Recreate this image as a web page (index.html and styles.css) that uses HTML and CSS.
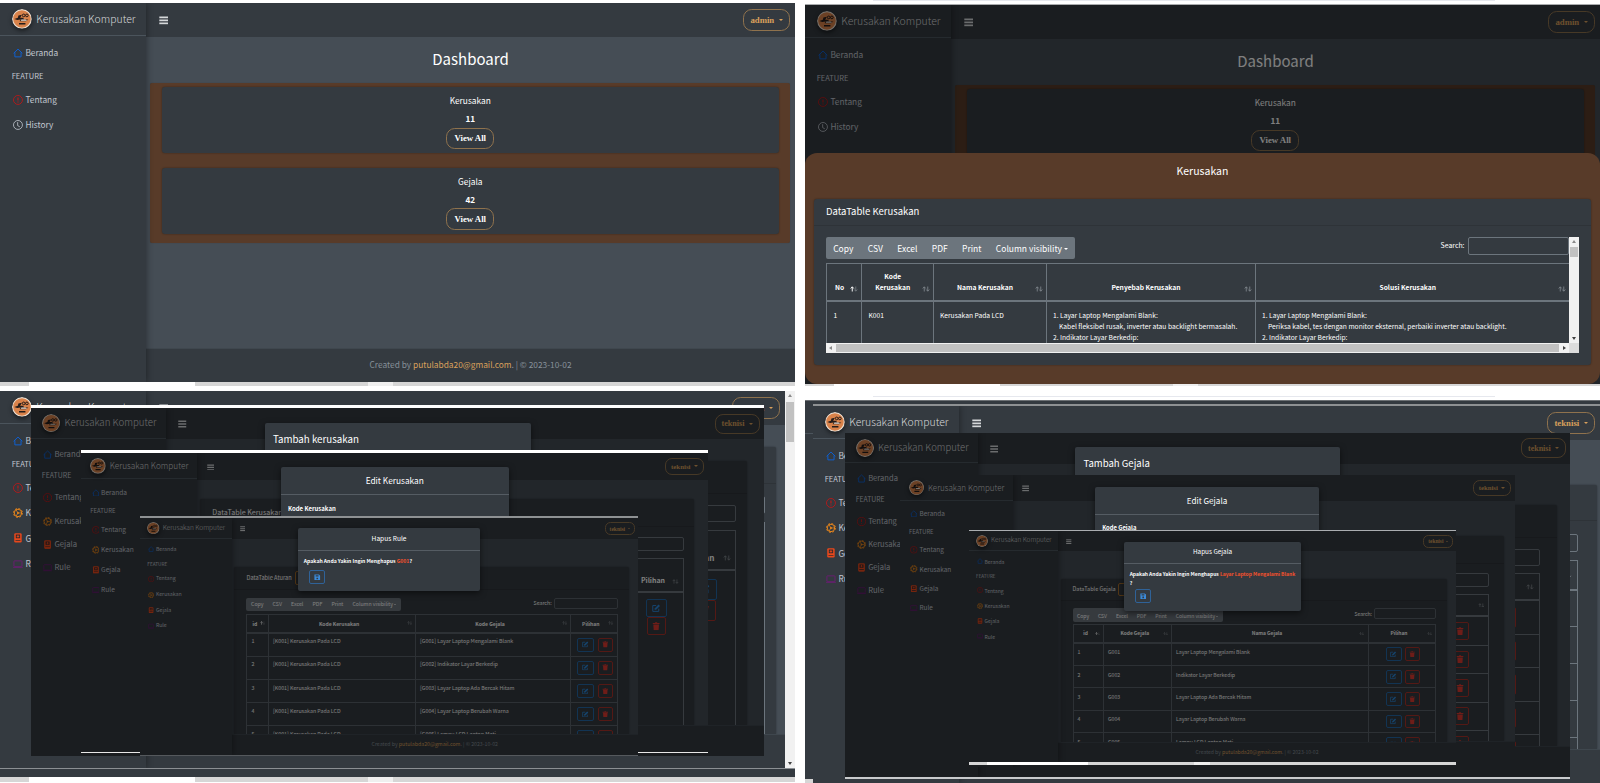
FILE: index.html
```
<!DOCTYPE html>
<html lang="id">
<head>
<meta charset="utf-8">
<title>Kerusakan Komputer</title>
<link rel="stylesheet" href="styles.css">
</head>
<body>
<svg width="0" height="0" class="defs">
  <symbol id="logo" viewBox="0 0 34 34"><circle cx="17" cy="17" r="17" fill="#e9dccf"/><circle cx="17" cy="17" r="15" fill="#d9824a"/><path d="M4 17l6-2 1-4 6-1-3 5h5l2 3h7l-4 3H13l2-3-6 1zM12 24h11v2.500H12z" fill="#241c1a"/><circle cx="20" cy="11" r="2.300" fill="none" stroke="#241c1a" stroke-width="1.700"/><circle cx="25.500" cy="11" r="2.300" fill="none" stroke="#241c1a" stroke-width="1.700"/><path d="M16 18h7l3 2H15z" fill="#f0e6dc"/></symbol>
  <symbol id="house" viewBox="0 0 16 16"><path d="M1 8.500L8 1.700l7 6.800M3 7v7.300h10V7" fill="none" stroke="#0d62d8" stroke-width="1.500"/></symbol>
  <symbol id="alert" viewBox="0 0 16 16"><circle cx="8" cy="8" r="7.200" fill="none" stroke="#c01818" stroke-width="1.400"/><path d="M8 4v5M8 10.500v1.600" stroke="#c01818" stroke-width="1.800"/></symbol>
  <symbol id="clock" viewBox="0 0 16 16"><circle cx="8" cy="8" r="7.200" fill="none" stroke="#c2c7d0" stroke-width="1.300"/><path d="M7.500 3.500V9l3.500 2" fill="none" stroke="#c2c7d0" stroke-width="1.300"/></symbol>
  <symbol id="gear" viewBox="0 0 16 16"><circle cx="8" cy="8" r="6" fill="none" stroke="#e8861c" stroke-width="1.600"/><circle cx="8" cy="8" r="7.200" fill="none" stroke="#e8861c" stroke-width="1.500" stroke-dasharray="3 2.650"/><path d="M8 8h5.500M8 8L5 3M8 8l-3 5" stroke="#e8861c" stroke-width="1.200"/><circle cx="8" cy="8" r="1.600" fill="#e8861c"/></symbol>
  <symbol id="medic" viewBox="0 0 16 16"><rect x="2" y=".5" width="12" height="15" rx="2" fill="#e8481c"/><path d="M4.500 2.500h7v6h-7zM4 11.200h8v1.200H4z" fill="#3a2b2c"/><path d="M8 3.500v4M6 5.500h4" stroke="#e8481c" stroke-width="1.500"/></symbol>
  <symbol id="rule" viewBox="0 0 16 16"><rect x="1.500" y="3" width="13" height="9.500" rx="1" fill="none" stroke="#7a1580" stroke-width="1.200"/><path d="M0 13.500h16" stroke="#7a1580" stroke-width="1"/></symbol>
  <symbol id="bars" viewBox="0 0 16 16"><path d="M0 2.500h16M0 8h16M0 13.500h16" stroke="#d5d8da" stroke-width="3"/></symbol>
  <symbol id="sort" viewBox="0 0 16 12"><path d="M4.500 11V2M1.500 5l3-3.500 3 3.500M11.500 1v9M8.500 7l3 3.500 3-3.500" fill="none" stroke="currentColor" stroke-width="1.500"/></symbol>
  <symbol id="sortup" viewBox="0 0 16 12"><path d="M4.500 11V2M1.500 5l3-3.500 3 3.500" fill="none" stroke="#fff" stroke-width="1.900"/><path d="M11.500 1v9M8.500 7l3 3.500 3-3.500" fill="none" stroke="#8a9096" stroke-width="1.200"/></symbol>
  <symbol id="edit" viewBox="0 0 16 16"><path d="M13 9v5.200H1.500V3H8" fill="none" stroke="#2b87d8" stroke-width="1.900"/><path d="M5 11.500l.6-3.400L12.500 1l2.900 2.700-7 7.100z" fill="#2b87d8"/></symbol>
  <symbol id="trash" viewBox="0 0 16 16"><path d="M1.500 2h4L6.500.7h3L10.500 2h4v2h-13zM2.500 5h11l-.8 10.800H3.300z" fill="#dc3a30"/></symbol>
  <symbol id="save" viewBox="0 0 16 16"><path d="M1 1h11l3 3v11H1z" fill="#3b8ad8"/><path d="M4 3h7v3H4zM6 9h4v4H6z" fill="#343a40"/></symbol>
</svg>

<main class="board">

<!-- Dashboard -->
<section class="win w1">
  <aside class="side"><div class="brand"><svg><use href="#logo"/></svg><span>Kerusakan Komputer</span></div>
    <ul><li><svg><use href="#house"/></svg>Beranda</li><li class="cap">FEATURE</li><li><svg><use href="#alert"/></svg>Tentang</li><li><svg><use href="#clock"/></svg>History</li></ul></aside>
  <div class="page">
    <header class="nav"><svg><use href="#bars"/></svg><button class="pill">admin <i></i></button></header>
    <div class="body"><h1>Dashboard</h1>
      <div class="brown"><div class="stat"><span>Kerusakan</span><b>11</b><button class="pill view">View All</button></div><div class="stat"><span>Gejala</span><b>42</b><button class="pill view">View All</button></div></div></div>
    <footer class="foot">Created by <b>putulabda20@gmail.com</b>. | © 2023-10-02</footer>
  </div>
</section>
<div class="strip s1"></div>

<!-- Dashboard with the Kerusakan sheet open -->
<div class="urlbar u1"></div>
<section class="win w2">
  <aside class="side"><div class="brand"><svg><use href="#logo"/></svg><span>Kerusakan Komputer</span></div>
    <ul><li><svg><use href="#house"/></svg>Beranda</li><li class="cap">FEATURE</li><li><svg><use href="#alert"/></svg>Tentang</li><li><svg><use href="#clock"/></svg>History</li></ul></aside>
  <div class="page">
    <header class="nav"><svg><use href="#bars"/></svg><button class="pill">admin <i></i></button></header>
    <div class="body"><h1>Dashboard</h1>
      <div class="brown"><div class="stat"><span>Kerusakan</span><b>11</b><button class="pill view">View All</button></div><div class="stat"></div></div></div>
  </div>
  <div class="shade"></div>
  <div class="sheet">
    <h2>Kerusakan</h2>
    <div class="card">
      <div class="chead">DataTable Kerusakan</div>
      <div class="scroller">
        <div class="view-port">
          <div class="tools"><div class="btns"><span>Copy</span><span>CSV</span><span>Excel</span><span>PDF</span><span>Print</span><span>Column visibility <i></i></span></div><label>Search: <span class="inp"></span></label></div>
          <div class="grid">
            <div class="tr th"><div>No<svg><use href="#sortup"/></svg></div><div>Kode<br>Kerusakan<svg><use href="#sort"/></svg></div><div>Nama Kerusakan<svg><use href="#sort"/></svg></div><div>Penyebab Kerusakan<svg><use href="#sort"/></svg></div><div>Solusi Kerusakan<svg><use href="#sort"/></svg></div></div>
            <div class="tr"><div>1</div><div>K001</div><div>Kerusakan Pada LCD</div>
              <div>1. Layar Laptop Mengalami Blank:<br><span class="ind">Kabel fleksibel rusak, inverter atau backlight bermasalah.</span><br>2. Indikator Layar Berkedip:</div>
              <div>1. Layar Laptop Mengalami Blank:<br><span class="ind">Periksa kabel, tes dengan monitor eksternal, perbaiki inverter atau backlight.</span><br>2. Indikator Layar Berkedip:</div></div>
          </div>
        </div>
        <div class="vbar"><i class="up"></i><em></em><i class="dn"></i></div>
        <div class="hbar"><i class="lf"></i><em></em><i class="rt"></i></div>
        <div class="corner"></div>
      </div>
    </div>
  </div>
</section>
<div class="strip s2"></div>

<!-- Kerusakan and rule windows -->
<section class="win w3">
  <aside class="side"><div class="brand"><svg><use href="#logo"/></svg><span>Kerusakan Komputer</span></div>
    <ul><li><svg><use href="#house"/></svg>Beranda</li><li class="cap">FEATURE</li><li><svg><use href="#alert"/></svg>Tentang</li><li><svg><use href="#gear"/></svg>Kerusakan</li><li><svg><use href="#medic"/></svg>Gejala</li><li><svg><use href="#rule"/></svg>Rule</li></ul></aside>
  <div class="page">
    <header class="nav"><svg><use href="#bars"/></svg><button class="pill">teknisi <i></i></button></header>
    <div class="body"><div class="panel"><div class="chead"></div><div class="tools"><label><span class="inp"></span></label></div><div class="grid"><div class="tr th"><div></div><div></div></div><div class="tr"><div></div><div></div></div></div></div></div>
    <footer class="foot"></footer>
  </div>
  <div class="winbar"><i class="up"></i><em></em><i class="dn"></i></div>
</section>
<div class="under"></div>
<div class="strip s3"></div>

<section class="win w3b">
  <aside class="side"><div class="brand"><svg><use href="#logo"/></svg><span>Kerusakan Komputer</span></div>
    <ul><li><svg><use href="#house"/></svg>Beranda</li><li class="cap">FEATURE</li><li><svg><use href="#alert"/></svg>Tentang</li><li><svg><use href="#gear"/></svg>Kerusakan</li><li><svg><use href="#medic"/></svg>Gejala</li><li><svg><use href="#rule"/></svg>Rule</li></ul></aside>
  <div class="page">
    <header class="nav"><svg><use href="#bars"/></svg><button class="pill">teknisi <i></i></button></header>
    <div class="body"><div class="panel"><div class="chead"></div><div class="tools"><label><span class="inp"></span></label></div><div class="grid"><div class="tr th"><div></div><div>Pilihan<svg><use href="#sort"/></svg></div></div><div class="tr"><div></div><div class="acts"><span class="ab"><svg><use href="#edit"/></svg></span><span class="ab del"><svg><use href="#trash"/></svg></span></div></div></div></div></div>
    <footer class="foot"></footer>
  </div>
  <div class="shade"></div>
  <div class="modal m-left"><h3>Tambah kerusakan</h3></div>
</section>

<section class="win w3c">
  <aside class="side"><div class="brand"><svg><use href="#logo"/></svg><span>Kerusakan Komputer</span></div>
    <ul><li><svg><use href="#house"/></svg>Beranda</li><li class="cap">FEATURE</li><li><svg><use href="#alert"/></svg>Tentang</li><li><svg><use href="#gear"/></svg>Kerusakan</li><li><svg><use href="#medic"/></svg>Gejala</li><li><svg><use href="#rule"/></svg>Rule</li></ul></aside>
  <div class="page">
    <header class="nav"><svg><use href="#bars"/></svg><button class="pill">teknisi <i></i></button></header>
    <div class="body"><div class="panel"><div class="chead">DataTable Kerusakan</div><div class="tools"><label><span class="inp"></span></label></div><div class="grid"><div class="tr th"><div></div><div>Pilihan<svg><use href="#sort"/></svg></div></div><div class="tr"><div></div><div class="acts"><span class="ab"><svg><use href="#edit"/></svg></span><span class="ab del"><svg><use href="#trash"/></svg></span></div></div></div></div></div>
    <footer class="foot"></footer>
  </div>
  <div class="shade"></div>
  <div class="modal"><h3>Edit Kerusakan</h3><p><b>Kode Kerusakan</b></p></div>
</section>

<section class="win w3d">
  <aside class="side"><div class="brand"><svg><use href="#logo"/></svg><span>Kerusakan Komputer</span></div>
    <ul><li><svg><use href="#house"/></svg>Beranda</li><li class="cap">FEATURE</li><li><svg><use href="#alert"/></svg>Tentang</li><li><svg><use href="#gear"/></svg>Kerusakan</li><li><svg><use href="#medic"/></svg>Gejala</li><li><svg><use href="#rule"/></svg>Rule</li></ul></aside>
  <div class="page">
    <header class="nav"><svg><use href="#bars"/></svg><button class="pill">teknisi <i></i></button></header>
    <div class="body"><div class="panel"><div class="chead">DataTable Aturan <span class="add"></span></div>
      <div class="tools"><div class="btns"><span>Copy</span><span>CSV</span><span>Excel</span><span>PDF</span><span>Print</span><span>Column visibility <i></i></span></div><label>Search: <span class="inp"></span></label></div>
      <div class="grid">
        <div class="tr th"><div>id<svg><use href="#sortup"/></svg></div><div>Kode Kerusakan<svg><use href="#sort"/></svg></div><div>Kode Gejala<svg><use href="#sort"/></svg></div><div>Pilihan<svg><use href="#sort"/></svg></div></div>
        <div class="tr"><div>1</div><div>[K001] Kerusakan Pada LCD</div><div>[G001] Layar Laptop Mengalami Blank</div><div class="acts"><span class="ab"><svg><use href="#edit"/></svg></span><span class="ab del"><svg><use href="#trash"/></svg></span></div></div>
        <div class="tr"><div>2</div><div>[K001] Kerusakan Pada LCD</div><div>[G002] Indikator Layar Berkedip</div><div class="acts"><span class="ab"><svg><use href="#edit"/></svg></span><span class="ab del"><svg><use href="#trash"/></svg></span></div></div>
        <div class="tr"><div>3</div><div>[K001] Kerusakan Pada LCD</div><div>[G003] Layar Laptop Ada Bercak Hitam</div><div class="acts"><span class="ab"><svg><use href="#edit"/></svg></span><span class="ab del"><svg><use href="#trash"/></svg></span></div></div>
        <div class="tr"><div>4</div><div>[K001] Kerusakan Pada LCD</div><div>[G004] Layar Laptop Berubah Warna</div><div class="acts"><span class="ab"><svg><use href="#edit"/></svg></span><span class="ab del"><svg><use href="#trash"/></svg></span></div></div>
        <div class="tr"><div>5</div><div>[K001] Kerusakan Pada LCD</div><div>[G005] Lampu LCD Laptop Mati</div><div class="acts"><span class="ab"><svg><use href="#edit"/></svg></span><span class="ab del"><svg><use href="#trash"/></svg></span></div></div>
      </div></div></div>
    <footer class="foot">Created by <b>putulabda20@gmail.com</b>. | © 2023-10-02</footer>
  </div>
  <div class="shade"></div>
  <div class="modal"><h3>Hapus Rule</h3><p><b>Apakah Anda Yakin Ingin Menghapus <em>G001</em>?</b></p><span class="ab save"><svg><use href="#save"/></svg></span></div>
</section>

<!-- Gejala windows -->
<div class="urlbar u2"></div>
<div class="back4"><i></i></div>
<section class="win w4">
  <aside class="side"><div class="brand"><svg><use href="#logo"/></svg><span>Kerusakan Komputer</span></div>
    <ul><li><svg><use href="#house"/></svg>Beranda</li><li class="cap">FEATURE</li><li><svg><use href="#alert"/></svg>Tentang</li><li><svg><use href="#gear"/></svg>Kerusakan</li><li><svg><use href="#medic"/></svg>Gejala</li><li><svg><use href="#rule"/></svg>Rule</li></ul></aside>
  <div class="page">
    <header class="nav"><svg><use href="#bars"/></svg><button class="pill">teknisi <i></i></button></header>
    <div class="body"><div class="panel"><div class="chead"></div><div class="tools"><label><span class="inp"></span></label></div><div class="grid"><div class="tr th"><div></div><div><svg><use href="#sort"/></svg></div></div><div class="tr"><div></div><div></div></div><div class="tr"><div></div><div></div></div><div class="tr"><div></div><div></div></div><div class="tr"><div></div><div></div></div><div class="tr"><div></div><div></div></div></div></div></div>
    <footer class="foot"></footer>
  </div>
</section>

<section class="win w4b">
  <aside class="side"><div class="brand"><svg><use href="#logo"/></svg><span>Kerusakan Komputer</span></div>
    <ul><li><svg><use href="#house"/></svg>Beranda</li><li class="cap">FEATURE</li><li><svg><use href="#alert"/></svg>Tentang</li><li><svg><use href="#gear"/></svg>Kerusakan</li><li><svg><use href="#medic"/></svg>Gejala</li><li><svg><use href="#rule"/></svg>Rule</li></ul></aside>
  <div class="page">
    <header class="nav"><svg><use href="#bars"/></svg><button class="pill">teknisi <i></i></button></header>
    <div class="body"><div class="panel"><div class="chead"></div><div class="tools"><label><span class="inp"></span></label></div><div class="grid"><div class="tr th"><div></div><div><svg><use href="#sort"/></svg></div></div><div class="tr"><div></div><div class="acts"><span class="ab del"></span></div></div><div class="tr"><div></div><div class="acts"><span class="ab del"></span></div></div><div class="tr"><div></div><div class="acts"><span class="ab del"></span></div></div><div class="tr"><div></div><div class="acts"><span class="ab del"></span></div></div><div class="tr"><div></div><div class="acts"><span class="ab del"></span></div></div></div></div></div>
    <footer class="foot"></footer>
  </div>
  <div class="shade"></div>
  <div class="modal m-left"><h3>Tambah Gejala</h3></div>
</section>

<section class="win w4c">
  <aside class="side"><div class="brand"><svg><use href="#logo"/></svg><span>Kerusakan Komputer</span></div>
    <ul><li><svg><use href="#house"/></svg>Beranda</li><li class="cap">FEATURE</li><li><svg><use href="#alert"/></svg>Tentang</li><li><svg><use href="#gear"/></svg>Kerusakan</li><li><svg><use href="#medic"/></svg>Gejala</li><li><svg><use href="#rule"/></svg>Rule</li></ul></aside>
  <div class="page">
    <header class="nav"><svg><use href="#bars"/></svg><button class="pill">teknisi <i></i></button></header>
    <div class="body"><div class="panel"><div class="chead"></div><div class="tools"><label><span class="inp"></span></label></div><div class="grid"><div class="tr th"><div></div><div><svg><use href="#sort"/></svg></div></div><div class="tr"><div></div><div class="acts"><span class="ab del"><svg><use href="#trash"/></svg></span></div></div><div class="tr"><div></div><div class="acts"><span class="ab del"><svg><use href="#trash"/></svg></span></div></div><div class="tr"><div></div><div class="acts"><span class="ab del"><svg><use href="#trash"/></svg></span></div></div><div class="tr"><div></div><div class="acts"><span class="ab del"><svg><use href="#trash"/></svg></span></div></div><div class="tr"><div></div><div class="acts"><span class="ab del"><svg><use href="#trash"/></svg></span></div></div></div></div></div>
    <footer class="foot"></footer>
  </div>
  <div class="shade"></div>
  <div class="modal"><h3>Edit Gejala</h3><p><b>Kode Gejala</b></p></div>
</section>

<section class="win w4d">
  <aside class="side"><div class="brand"><svg><use href="#logo"/></svg><span>Kerusakan Komputer</span></div>
    <ul><li><svg><use href="#house"/></svg>Beranda</li><li class="cap">FEATURE</li><li><svg><use href="#alert"/></svg>Tentang</li><li><svg><use href="#gear"/></svg>Kerusakan</li><li><svg><use href="#medic"/></svg>Gejala</li><li><svg><use href="#rule"/></svg>Rule</li></ul></aside>
  <div class="page">
    <header class="nav"><svg><use href="#bars"/></svg><button class="pill">teknisi <i></i></button></header>
    <div class="body"><div class="panel"><div class="chead">DataTable Gejala <span class="add"></span></div>
      <div class="tools"><div class="btns"><span>Copy</span><span>CSV</span><span>Excel</span><span>PDF</span><span>Print</span><span>Column visibility <i></i></span></div><label>Search: <span class="inp"></span></label></div>
      <div class="grid">
        <div class="tr th"><div>id<svg><use href="#sortup"/></svg></div><div>Kode Gejala<svg><use href="#sort"/></svg></div><div>Nama Gejala<svg><use href="#sort"/></svg></div><div>Pilihan<svg><use href="#sort"/></svg></div></div>
        <div class="tr"><div>1</div><div>G001</div><div>Layar Laptop Mengalami Blank</div><div class="acts"><span class="ab"><svg><use href="#edit"/></svg></span><span class="ab del"><svg><use href="#trash"/></svg></span></div></div>
        <div class="tr"><div>2</div><div>G002</div><div>Indikator Layar Berkedip</div><div class="acts"><span class="ab"><svg><use href="#edit"/></svg></span><span class="ab del"><svg><use href="#trash"/></svg></span></div></div>
        <div class="tr"><div>3</div><div>G003</div><div>Layar Laptop Ada Bercak Hitam</div><div class="acts"><span class="ab"><svg><use href="#edit"/></svg></span><span class="ab del"><svg><use href="#trash"/></svg></span></div></div>
        <div class="tr"><div>4</div><div>G004</div><div>Layar Laptop Berubah Warna</div><div class="acts"><span class="ab"><svg><use href="#edit"/></svg></span><span class="ab del"><svg><use href="#trash"/></svg></span></div></div>
        <div class="tr"><div>5</div><div>G005</div><div>Lampu LCD Laptop Mati</div><div class="acts"><span class="ab"><svg><use href="#edit"/></svg></span><span class="ab del"><svg><use href="#trash"/></svg></span></div></div>
      </div></div></div>
    <footer class="foot">Created by <b>putulabda20@gmail.com</b>. | © 2023-10-02</footer>
  </div>
  <div class="shade"></div>
  <div class="modal"><h3>Hapus Gejala</h3><p><b>Apakah Anda Yakin Ingin Menghapus <em>Layar Laptop Mengalami Blank</em><br>?</b></p><span class="ab save"><svg><use href="#save"/></svg></span></div>
</section>
<div class="strip s4"></div>
</main>
</body>
</html>
```

FILE: styles.css
```
* { box-sizing: border-box; }
body { margin: 0; background: #fff; font-family: "Noto Sans CJK SC", "Noto Sans", sans-serif; }
h1, h2, h3, p, ul { margin: 0; padding: 0; font-weight: 400; }
.defs { position: absolute; }
.board { position: relative; width: 1600px; height: 783px; overflow: hidden; background: #fff; }

/* Each window is an app screen drawn at its own scale: --u is one app pixel. */
.win {
  position: absolute; isolation: isolate; display: flex; overflow: hidden; background: #454d55; color: #fff;
  --pt: 77; --th: 51; --row: 63; --pr: 30; --ir: 30; --line: #6c757d;
  font-size: calc(14.3 * var(--u)); line-height: 1.4;
}
.w1 { left: 0; top: 3px; width: 795px; height: 379px; --u: .584px; }
.w2 { left: 805px; top: 4px; width: 795px; height: 380px; --u: .584px; border-top: 1px solid #a9abad; }
.w3 { left: 0; top: 391px; width: 795px; height: 378px; --u: .584px; border-bottom: 1px solid #8b8f93; --pt: 40; --th: 74; --row: 600; --pr: 15; --ir: 20; padding-right: 10px; }
.w3b { left: 31px; top: 405px; width: 733px; height: 351px; --u: .54px; border-top: 3px solid #fff; --pt: 41; --th: 75; --row: 600; --pr: 31; --ir: 20; }
.w3c { left: 81px; top: 450px; width: 627px; height: 303px; --u: .4625px; border-top: 3px solid #fff; border-bottom: 1px solid #e8e8e8; --pt: 42; --th: 74; --row: 600; --pr: 31; --ir: 21; }
.w3d { left: 140px; top: 516px; width: 498px; height: 240px; --u: .366px; border-top: 2px solid #8e9193; border-bottom: 1px solid #55595d; --cols: 20.500px 147px 155px 1fr; --pr: 25; --ir: 31; --pt: 78; --line: #5b636a; }
.w4 { left: 813px; top: 404px; width: 787px; height: 379px; --u: .584px; border-top: 2px solid #8e9193; --pr: 5; --ir: 33; --pt: 79; }
.w4b { left: 845px; top: 433px; width: 725px; height: 346px; --u: .532px; border-bottom: 2px solid #c8cacc; --pr: 25; --ir: 32; --pt: 79; }
.w4c { left: 900px; top: 475px; width: 615px; height: 292px; --u: .45px; --pr: 25; --ir: 32; --pt: 79; }
.w4d { left: 969px; top: 530px; width: 487px; height: 233px; --u: .356px; border-top: 1px solid #aaadb0; --cols: 29.500px 68px 196.500px 1fr; --pr: 25; --ir: 31; --pt: 78; --line: #5b636a; }

/* Sidebar */
.side { flex: none; width: calc(250 * var(--u)); background: #343a40; box-shadow: 0 0 7px rgba(0,0,0,.45); z-index: 1; color: #c2c7d0; }
.brand { display: flex; align-items: center; height: calc(57 * var(--u)); border-bottom: 1px solid #4b545c; padding-left: calc(20 * var(--u)); gap: calc(8 * var(--u)); font-size: calc(17.900 * var(--u)); font-weight: 300; color: #d6d8d9; white-space: nowrap; }
.brand svg { width: calc(34 * var(--u)); height: calc(34 * var(--u)); border-radius: 50%; box-shadow: 0 2px 4px rgba(0,0,0,.5); flex: none; }
.side ul { list-style: none; padding-top: calc(7 * var(--u)); }
.side li { display: flex; align-items: center; height: calc(43 * var(--u)); padding-left: calc(23 * var(--u)); gap: calc(3.500 * var(--u)); white-space: nowrap; }
.side li svg { width: calc(17 * var(--u)); height: calc(17 * var(--u)); }
.side li.cap { height: calc(38 * var(--u)); padding-left: calc(20 * var(--u)); font-size: calc(12.900 * var(--u)); }

/* Page column */
.page { flex: 1; display: flex; flex-direction: column; min-width: 0; }
.nav { flex: none; height: calc(57.500 * var(--u)); background: #343a40; display: flex; align-items: center; justify-content: space-between; padding: 0 calc(8 * var(--u)) 0 calc(22 * var(--u)); }
.nav > svg { width: calc(16 * var(--u)); height: calc(15 * var(--u)); margin-top: calc(3 * var(--u)); }
.pill { height: calc(37 * var(--u)); border: 1px solid #8f724d; border-radius: calc(15 * var(--u)); background: none; color: #d9a05c; font: bold calc(15 * var(--u)) "Liberation Serif", serif; padding: 0 calc(11 * var(--u)); display: flex; align-items: center; gap: calc(8 * var(--u)); }
.pill i, .btns i { display: inline-block; border: calc(4.500 * var(--u)) solid transparent; border-top-color: currentColor; border-bottom: 0; vertical-align: middle; }
.body { flex: 1; min-height: 0; overflow: hidden; }
.foot { flex: none; height: calc(58 * var(--u)); background: #343a40; border-top: 1px solid #3f474e; display: flex; align-items: center; justify-content: center; color: #869099; white-space: pre; z-index: 0; padding-bottom: 1px; }
.foot b { color: #d9a05c; font-weight: 400; }
.w4d .foot { padding-bottom: 3px; }

/* Dashboard */
.body h1 { font-size: calc(25.700 * var(--u)); line-height: 43px; height: 46px; text-align: center; }
.brown { margin: 0 5px 0 4px; padding: 4.500px 11.500px 9.500px 12px; background: #583b29; border-radius: 2px; box-shadow: 0 0 1px rgba(0,0,0,.3); display: grid; gap: 14.500px; }
.stat { height: 66px; background: #343a40; border-radius: 3px; box-shadow: 0 0 2px rgba(0,0,0,.4); display: flex; flex-direction: column; align-items: center; padding-top: 4px; }
.stat span, .stat b { line-height: 18px; }
.stat b { font-size: 8.200px; line-height: 18.500px; }
.view { color: #fff; padding: 0 7px; }

/* Backdrop over a window that has a dialog open */
.shade { position: absolute; inset: 0; background: rgba(0,0,0,.5); z-index: 2; }

/* Bottom sheet */
.sheet { position: absolute; z-index: 3; left: 0; right: 0; bottom: 0; height: 231px; background: #583b29; border-radius: 12px; padding: 8px 9px 0; }
.sheet h2 { font-size: calc(18 * var(--u)); line-height: 20px; height: 37.500px; text-align: center; }
.card { height: 166.500px; background: #343a40; border-radius: 3px; box-shadow: 0 0 2px rgba(0,0,0,.4); }
.sheet .chead { height: 27px; border-bottom: 1px solid #2e3338; padding-left: 12px; line-height: 25px; font-size: 9.500px; }
.scroller { margin: 11.500px 12px 0; display: grid; grid-template: 105.500px 10.500px / 1fr 10px; }
.view-port { overflow: hidden; }
.sheet .tools { height: 25.500px; margin: 0; }
.sheet .btns { height: 22px; font-size: 8.500px; padding-top: 1px; }
.sheet .btns span { padding: 0 7.200px; }
.sheet .tools label { font-size: 6.900px; padding-top: 0; }
.sheet .inp { height: 18px; width: 101px; border-color: #6c757d; }
.sheet .grid { border-right: 0; }
.sheet .tr { grid-template-columns: 34px 71.500px 113px 209px 1fr; height: 80px; font-size: 6.700px; line-height: 11.400px; }
.sheet .tr > div { padding: 8px 6.500px; }
.sheet .th { height: 38px; }
.sheet .tr.th > div { padding: 0 14px 6px 5px; align-items: flex-end; }
.sheet .th svg { right: 3px; bottom: 8px; width: 8px; height: 6px; }
.ind { padding-left: 6px; }
.vbar, .hbar, .winbar { background: #f1f1f1; display: flex; align-items: center; justify-content: space-between; }
.vbar, .winbar { flex-direction: column; }
.vbar em { width: 8px; height: 10px; background: #c1c1c1; margin-bottom: auto; margin-top: 1px; }
.hbar em { flex: 1; height: 8px; background: #c1c1c1; margin: 0 1px; }
.corner { background: #dcdcdc; }
.up, .dn, .lf, .rt { border: 2px solid transparent; margin: 3px; }
.up { border-top: 0; border-bottom: 3px solid #8a8a8a; }
.dn { border-bottom: 0; border-top: 3px solid #404040; }
.lf { border-left: 0; border-right: 3px solid #8a8a8a; }
.rt { border-right: 0; border-left: 3px solid #404040; }
.winbar { position: absolute; right: 0; top: 0; bottom: 0; width: 10px; z-index: 2; }
.winbar em { width: 8px; height: 40px; background: #c1c1c1; margin: 2px 0 auto; }

/* Data tables */
.panel { height: 100%; margin: 0 calc(var(--pr) * var(--u)) 0 calc(8 * var(--u)); background: #343a40; padding: 0 calc(var(--ir) * var(--u)) 0 calc(33 * var(--u)); border-radius: 2px 2px 0 0; box-shadow: 0 0 2px rgba(0,0,0,.4); }
.body:has(.panel) { padding-top: calc((var(--pt) - 1) * var(--u)); }
.panel .chead { height: calc(62 * var(--u)); display: flex; align-items: center; gap: calc(8 * var(--u)); font-size: calc(15.500 * var(--u)); white-space: nowrap; border-bottom: 1px solid #2e3338; margin: 0 calc(-1 * var(--ir) * var(--u)) 0 calc(-33 * var(--u)); padding-left: calc(33 * var(--u)); }
.w3c .panel .chead { padding-left: calc(26 * var(--u)); }
.add { width: calc(40 * var(--u)); height: calc(36 * var(--u)); border: 1px solid #a8702c; border-radius: 2px; }
.tools { display: flex; justify-content: space-between; align-items: flex-start; height: calc(45 * var(--u)); margin-top: calc(21 * var(--u)); }
.tools label { display: flex; align-items: center; gap: calc(6 * var(--u)); margin-left: auto; }
.inp { width: calc(174 * var(--u)); height: calc(31 * var(--u)); border: 1px solid var(--line, #6c757d); border-radius: 2px; }
.btns { display: flex; align-items: center; height: calc(38 * var(--u)); background: #6c757d; border-radius: 2px; white-space: nowrap; }
.btns span { padding: 0 calc(12.500 * var(--u)); }
.grid { border: 1px solid var(--line); border-bottom: 0; }
.tr { display: grid; grid-template-columns: var(--cols, 1fr calc(116 * var(--u))); height: calc(var(--row) * var(--u)); border-bottom: 1px solid var(--line); font-size: calc(14.500 * var(--u)); }
.tr > div { padding: calc(13 * var(--u)) calc(11 * var(--u)); border-left: 1px solid var(--line); white-space: nowrap; min-width: 0; }
.tr > div:first-child { border-left: 0; }
.th { height: calc(var(--th) * var(--u)); border-bottom: 2px solid var(--line); font-weight: 700; font-size: calc(13.800 * var(--u)); }
.tr.th > div { position: relative; display: flex; justify-content: center; align-items: center; text-align: center; padding: 0 calc(24 * var(--u)) 0 calc(8 * var(--u)); }
.th svg { position: absolute; right: calc(8 * var(--u)); width: calc(15 * var(--u)); height: calc(11 * var(--u)); color: #8a9096; }
.tr > .acts { display: flex; justify-content: flex-end; align-items: center; gap: calc(10 * var(--u)); padding: 0 calc(43 * var(--u)) 0 0; }
.w3d .tr > .acts { padding-right: 4px; }
.ab { flex: none; width: calc(45 * var(--u)); height: calc(39 * var(--u)); border: 1px solid #2568a6; border-radius: 2px; display: flex; align-items: center; justify-content: center; }
.ab.del { width: calc(41 * var(--u)); border-color: #a8322a; }
.ab svg { width: calc(18 * var(--u)); height: calc(18 * var(--u)); }
.w3b .tr > .acts, .w3c .tr > .acts { flex-direction: column; justify-content: flex-start; align-items: center; gap: 0; padding: calc(14 * var(--u)) 0 0; }
.w3b .tr.th > div, .w3c .tr.th > div { padding-top: calc(28 * var(--u)); }
.w3b .th, .w3c .th { font-size: calc(15 * var(--u)); }

/* Dialogs */
.modal { position: absolute; z-index: 3; background: #343a40; border-radius: 2px; box-shadow: 0 2px 6px rgba(0,0,0,.55); }
.modal h3 { display: flex; align-items: center; justify-content: center; font-size: calc(18 * var(--u)); height: calc(62 * var(--u)); border-bottom: 1px solid #555c63; white-space: nowrap; }
.modal.m-left h3 { justify-content: flex-start; padding-left: 8.500px; border: 0; height: calc(64 * var(--u)); }
.modal p { padding: calc(18 * var(--u)) calc(16 * var(--u)) 0; font-size: calc(13 * var(--u)); line-height: calc(24 * var(--u)); white-space: nowrap; }
.w3d .modal p, .w4d .modal p { font-size: calc(14 * var(--u)); }
.modal em { font-style: normal; color: #f4512c; }
.modal .save { margin: calc(10 * var(--u)) 0 0 11px; border-color: #2f6298; }
.w4d .modal .save { margin-top: calc(5 * var(--u)); }
.w3b .modal { left: 233.500px; top: 15px; width: 266.500px; height: 60px; }
.w3c .modal { left: 199.500px; top: 13.500px; width: 228.500px; height: 70px; }
.w3d .modal { left: 158px; top: 10px; width: 182px; height: 63px; }
.w4b .modal { left: 230px; top: 14px; width: 265px; height: 60px; }
.w4c .modal { left: 195px; top: 12px; width: 224px; height: 60px; }
.w4d .modal { left: 155px; top: 10.500px; width: 177px; height: 69.500px; }

/* Taskbar and address bar slivers between windows */
.strip { position: absolute; height: 4px; background: #d6d6d6; }
.s1, .s3 { left: 0; width: 795px; background: linear-gradient(90deg, #d6d6d6 29px, #fff 29px 195px, #d6d6d6 195px 368px, #efefef 368px 393px, #d6d6d6 393px); }
.s1 { top: 382px; }
.s3 { top: 777px; height: 5px; }
.s2 { left: 805px; top: 384px; height: 2px; width: 795px; background: linear-gradient(90deg, #d6d6d6 29px, #fff 29px 195px, #d6d6d6 195px 368px, #efefef 368px 393px, #d6d6d6 393px); }
.s4 { left: 969px; top: 762px; height: 3px; width: 487px; background: linear-gradient(90deg, #d6d6d6 18px, #fff 18px 119px, #d6d6d6 119px 225px, #efefef 225px 241px, #d6d6d6 241px); }
.urlbar { position: absolute; left: 873px; width: 622px; height: 1px; background: #e6e8ee; }
.u1 { top: 0; }
.u2 { top: 396px; }
.under { position: absolute; left: 0; top: 769px; width: 795px; height: 8px; background: #343a40; }
.back4 { position: absolute; left: 805px; top: 400px; width: 795px; height: 383px; background: #343a40; border-top: 1px solid #6c7074; border-bottom: 4px solid #d6d6d6; }
.back4 i { display: block; height: 33px; border-bottom: 1px solid #4b545c; }
```
